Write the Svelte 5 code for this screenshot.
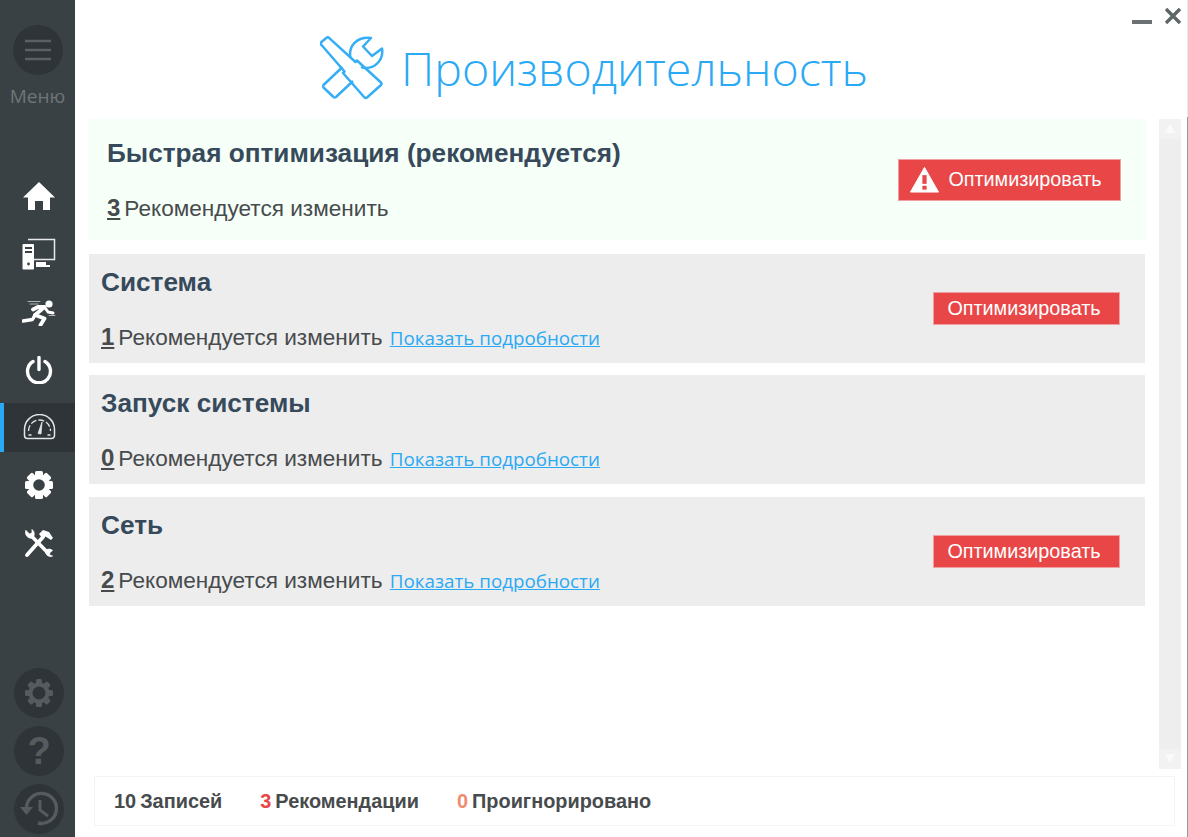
<script>
  const sections = [
    { title: 'Система', count: 1, fix: true },
    { title: 'Запуск системы', count: 0, fix: false },
    { title: 'Сеть', count: 2, fix: true }
  ];
  const teeth = [0, 45, 90, 135];
</script>

<div class="window">
  <aside class="sidebar">
    <div class="menu">
      <span class="round">
        <svg width="26" height="22" viewBox="0 0 26 22"><path d="M0 2h26M0 11h26M0 20h26" stroke="#5a6063" stroke-width="2.4" /></svg>
      </span>
      <span class="menu-label">Меню</span>
    </div>

    <nav class="nav">
      <div class="nav-item">
        <svg width="32" height="30" viewBox="0 0 32 30"><path d="M16 1 32 16.500h-5V29h-7v-9h-8v9H5V16.500H0z" fill="#fff" /></svg>
      </div>
      <div class="nav-item">
        <svg width="34" height="32" viewBox="0 0 34 32">
          <path d="M6 1.500h26.500v20H12" fill="none" stroke="#e8eaea" stroke-width="1.500" />
          <path d="M14 24h10v3h4v2H14z" fill="#fff" />
          <path d="M1.500 6h9.500a1 1 0 0 1 1 1v23.500a1 1 0 0 1-1 1H1.500a1 1 0 0 1-1-1V7a1 1 0 0 1 1-1z" fill="#fff" />
          <path d="M3 10h7M3 14h7" stroke="#3a4144" stroke-width="2" />
          <circle cx="6.500" cy="26" r="1.400" fill="#3a4144" />
        </svg>
      </div>
      <div class="nav-item">
        <svg width="34" height="28" viewBox="0 0 34 28" fill="none" stroke="#fff" stroke-linecap="round" stroke-linejoin="round">
          <circle cx="27" cy="6" r="3.600" fill="#fff" stroke="none" />
          <path d="M1 23 10.500 21.500 13 17" stroke-width="3.400" />
          <path d="M11 11.500 16 9 22.500 9 13 17 22.500 20.500 18.500 27" stroke-width="3.800" />
          <path d="M22.500 9 26 14 31 15" stroke-width="3" />
          <path d="M6 3.500h12M8 6h8" stroke-width="1" opacity="0.6" />
          <path d="M27 17.500h6" stroke-width="1" opacity="0.6" />
        </svg>
      </div>
      <div class="nav-item">
        <svg width="28" height="28" viewBox="0 0 28 28" fill="none" stroke="#fff" stroke-width="3.400" stroke-linecap="round">
          <path d="M8 5.500a11.500 11.500 0 1 0 12 0" />
          <path d="M14 1.500v12" />
        </svg>
      </div>
      <div class="nav-item active">
        <svg class="gauge" width="33" height="26" viewBox="0 0 32 26" fill="none" stroke="#e4e6e6">
          <path d="M4 24.500h24a3 3 0 0 0 3-3v-6a15 15 0 0 0-30 0v6a3 3 0 0 0 3 3z" stroke-width="1.500" />
          <path d="M5 17a11 11 0 0 1 22 0" stroke-width="1.300" stroke-dasharray="6 2" />
          <path d="M14.500 19.500 18.500 8 17.500 20z" fill="#e4e6e6" stroke-width="0.800" />
          <path d="M5 21h3M24 21h3" stroke-width="1.500" />
        </svg>
      </div>
      <div class="nav-item">
        <svg class="gear" width="30" height="30" viewBox="0 0 30 30">
          {#each teeth as t}
            <rect x="11" y="1" width="8" height="28" rx="1.500" fill="#fff" transform="rotate({t} 15 15)" />
          {/each}
          <circle cx="15" cy="15" r="10.500" fill="#fff" />
          <circle cx="15" cy="15" r="5.800" fill="#3a4144" />
        </svg>
      </div>
      <div class="nav-item">
        <svg class="gear" width="30" height="30" viewBox="0 0 30 30" fill="none" stroke="#fff" stroke-linecap="round">
          <path d="M3 27 19 9" stroke-width="3.800" />
          <path d="M15 6 19 2 25 4 29 10 27 12 21.500 8.500 19 11z" fill="#fff" stroke="none" />
          <path d="M7 7.500 24 25" stroke-width="3.600" />
          <path d="M2 2.500 5.500 6 8 5 8 1.500A5.500 5.500 0 0 1 8.500 10 5.500 5.500 0 0 1 1.500 5z" fill="#fff" stroke="#fff" stroke-width="0.800" stroke-linejoin="round" />
          <path d="M21.500 22.500A5 5 0 0 1 28.500 22.500L25.500 25 26 27.500 28.500 28A5 5 0 0 1 21.500 22.500z" fill="#fff" stroke="#fff" stroke-width="0.800" stroke-linejoin="round" />
        </svg>
      </div>
    </nav>

    <div class="tools">
      <span class="round">
        <svg width="30" height="30" viewBox="0 0 30 30">
          {#each teeth as t}
            <rect x="12" y="1" width="6" height="28" rx="1.500" fill="#555b5e" transform="rotate({t} 15 15)" />
          {/each}
          <circle cx="15" cy="15" r="10.500" fill="#555b5e" />
          <circle cx="15" cy="15" r="6.500" fill="#2e3437" />
        </svg>
      </span>
      <span class="round">
        <span class="help">?</span>
      </span>
      <span class="round">
        <svg width="38" height="36" viewBox="0 0 38 36" fill="none" stroke="#555b5e">
          <path d="M6.500 17A15 15 0 1 1 18 32" stroke-width="3.400" />
          <path d="M0 16h13l-6.500 8z" fill="#555b5e" stroke="none" />
          <path d="M20 9v10l8 6" stroke-width="3" />
        </svg>
      </span>
    </div>
  </aside>

  <main class="main">
    <div class="controls">
      <span class="minimize"></span>
      <svg width="18" height="18" viewBox="0 0 18 18"><path d="M2 2 16 16M16 2 2 16" stroke="#5f6668" stroke-width="3.400" /></svg>
    </div>

    <header class="header">
      <svg width="64" height="64" viewBox="0 0 64 64" fill="none" stroke="#36aef5" stroke-width="2.500" stroke-linejoin="round">
        <path d="M1.500 6 6.500 1.800a2 2 0 0 1 2.500 0L35.500 26 37 24.500 61 46.500a2 2 0 0 1 0 2.500L47 61.500a2 2 0 0 1-2.500 0L23 37 24.500 35.500 1.500 9a2 2 0 0 1 0-3z" />
        <path d="M30.500 22C28 10 37 .5 51 2L43 10.500 52 20 62 12.500C64 25 53 35 41 31" />
        <path d="M22.500 31 3.500 49a2 2 0 0 0 0 2.500L13.500 61a2 2 0 0 0 2.500 0L33 45" />
      </svg>
      <h1>Производительность</h1>
    </header>

    <div class="body">
      <div class="list">
        <section class="card quick">
          <div class="info">
            <h2>Быстрая оптимизация (рекомендуется)</h2>
            <p><span class="num">3</span>Рекомендуется изменить</p>
          </div>
          <button class="fix big">
            <svg width="29" height="27" viewBox="0 0 30 27">
              <path d="M15 1 29.500 26.500H.5z" fill="#fff" stroke="#fff" stroke-linejoin="round" />
              <rect x="12.800" y="9" width="4.400" height="9" fill="#e94747" />
              <rect x="12.800" y="20" width="4.400" height="4" fill="#e94747" />
            </svg>
            Оптимизировать
          </button>
        </section>

        {#each sections as s}
          <section class="card">
            <div class="info">
              <h2>{s.title}</h2>
              <p><span class="num">{s.count}</span>Рекомендуется изменить <a href="#top">Показать подробности</a></p>
            </div>
            {#if s.fix}
              <button class="fix">Оптимизировать</button>
            {/if}
          </section>
        {/each}
      </div>

      <div class="scrollbar">
        <span class="arrow up"></span>
        <span class="arrow down"></span>
      </div>
    </div>

    <footer class="status">
      <span><b>10</b> Записей</span>
      <span><b class="red">3</b> Рекомендации</span>
      <span><b class="orange">0</b> Проигнорировано</span>
    </footer>
  </main>
</div>

<style>
  :global(body) {
    background: #fff;
  }

  .window {
    display: flex;
    width: 1188px;
    height: 837px;
    overflow: hidden;
    font-family: "Liberation Sans", Arial, sans-serif;
  }

  .sidebar {
    display: flex;
    flex-direction: column;
    flex: none;
    width: 75px;
    background: #3a4144;
  }

  .menu {
    display: flex;
    flex-direction: column;
    align-items: center;
    padding-top: 25px;
  }

  .round {
    display: flex;
    align-items: center;
    justify-content: center;
    width: 50px;
    height: 50px;
    border-radius: 50%;
    background: #2e3437;
  }

  .menu-label {
    margin-top: 9px;
    font-family: "Open Sans", sans-serif;
    font-size: 19px;
    line-height: 24px;
    color: #6f7578;
  }

  .nav {
    display: flex;
    flex-direction: column;
    gap: 9px;
    margin-top: 63px;
  }

  .nav-item {
    display: flex;
    align-items: center;
    justify-content: center;
    height: 49px;
    padding-left: 3px;
  }

  .nav-item.active {
    background: #2e3437;
    border-left: 4px solid #2aa9f5;
    padding-left: 0;
  }

  .gauge {
    margin-bottom: 2px;
  }

  .gear {
    margin-bottom: 2px;
  }

  .tools {
    display: flex;
    flex-direction: column;
    align-items: center;
    gap: 8px;
    margin-top: auto;
    padding-left: 3px;
    padding-bottom: 3px;
  }

  .help {
    font-size: 38px;
    font-weight: bold;
    line-height: 1;
    color: #555b5e;
  }

  .main {
    position: relative;
    display: flex;
    flex-direction: column;
    flex: 1;
    min-width: 0;
    border-right: 1px solid #999;
    border-image: linear-gradient(#e8e8e8 0 118px, #999 118px) 1;
  }

  .controls {
    position: absolute;
    top: 7px;
    right: 5px;
    display: flex;
    align-items: flex-end;
    gap: 12px;
  }

  .minimize {
    width: 20px;
    height: 4px;
    margin-bottom: 1px;
    background: #6b7173;
  }

  .header {
    display: flex;
    align-items: center;
    gap: 17px;
    height: 119px;
    padding-left: 245px;
    padding-top: 16px;
    box-sizing: border-box;
  }

  h1 {
    margin: 0;
    font-family: "Open Sans", sans-serif;
    font-size: 46.5px;
    font-weight: 300;
    color: #2aa9f5;
  }

  .body {
    display: flex;
    flex: 1;
    min-height: 0;
    padding-left: 13px;
  }

  .list {
    display: flex;
    flex-direction: column;
    gap: 12px;
    width: 1058px;
  }

  .card {
    display: flex;
    align-items: center;
    justify-content: space-between;
    height: 109px;
    padding: 0 25px 0 12px;
    box-sizing: border-box;
    margin: 0 1px;
    background: #ededed;
  }

  .card:last-child {
    margin-top: 1px;
  }

  .card.quick {
    height: 121px;
    margin: 0 0 2px;
    padding: 0 25px 0 19px;
    background: #f6fff8;
  }

  .info {
    padding-top: 2px;
  }

  h2 {
    margin: 0 0 26px;
    font-size: 26.2px;
    line-height: 29px;
    color: #364a5b;
  }

  .info p {
    margin: 0;
    font-size: 22.6px;
    line-height: 28px;
    color: #474b4d;
  }

  .num {
    margin-right: 4px;
    font-size: 24px;
    font-weight: bold;
    text-decoration: underline;
  }

  a {
    margin-left: 1px;
    font-family: "Open Sans", sans-serif;
    font-size: 18.8px;
    color: #2aa9f5;
  }

  .fix {
    display: flex;
    align-items: center;
    justify-content: center;
    gap: 9px;
    width: 187px;
    height: 33px;
    padding: 0 5px 0 0;
    border: 1px solid #f0a0a0;
    background: #e94747;
    font-family: inherit;
    font-size: 19.8px;
    color: #fff;
  }

  .fix.big {
    width: 223px;
    height: 42px;
    padding-right: 7px;
  }

  .scrollbar {
    display: flex;
    flex-direction: column;
    justify-content: space-between;
    width: 22px;
    height: 650px;
    margin-left: 13px;
    background: #eeeeee;
  }

  .arrow {
    display: block;
    height: 20px;
    background: #f2f2f2;
    position: relative;
  }

  .arrow::after {
    content: "";
    position: absolute;
    left: 6px;
    top: 5px;
    border-left: 5px solid transparent;
    border-right: 5px solid transparent;
  }

  .arrow.up::after {
    border-bottom: 9px solid #fafafa;
  }

  .arrow.down::after {
    border-top: 9px solid #fafafa;
  }

  .status {
    display: flex;
    align-items: center;
    gap: 38px;
    height: 50px;
    margin: 7px 12px 11px 19px;
    padding-left: 19px;
    box-sizing: border-box;
    border: 1px solid #f4f4f4;
    font-size: 19.9px;
    font-weight: bold;
    word-spacing: -1.5px;
    color: #474b4d;
  }

  .red {
    color: #e94747;
  }

  .orange {
    color: #f08c70;
  }
</style>
